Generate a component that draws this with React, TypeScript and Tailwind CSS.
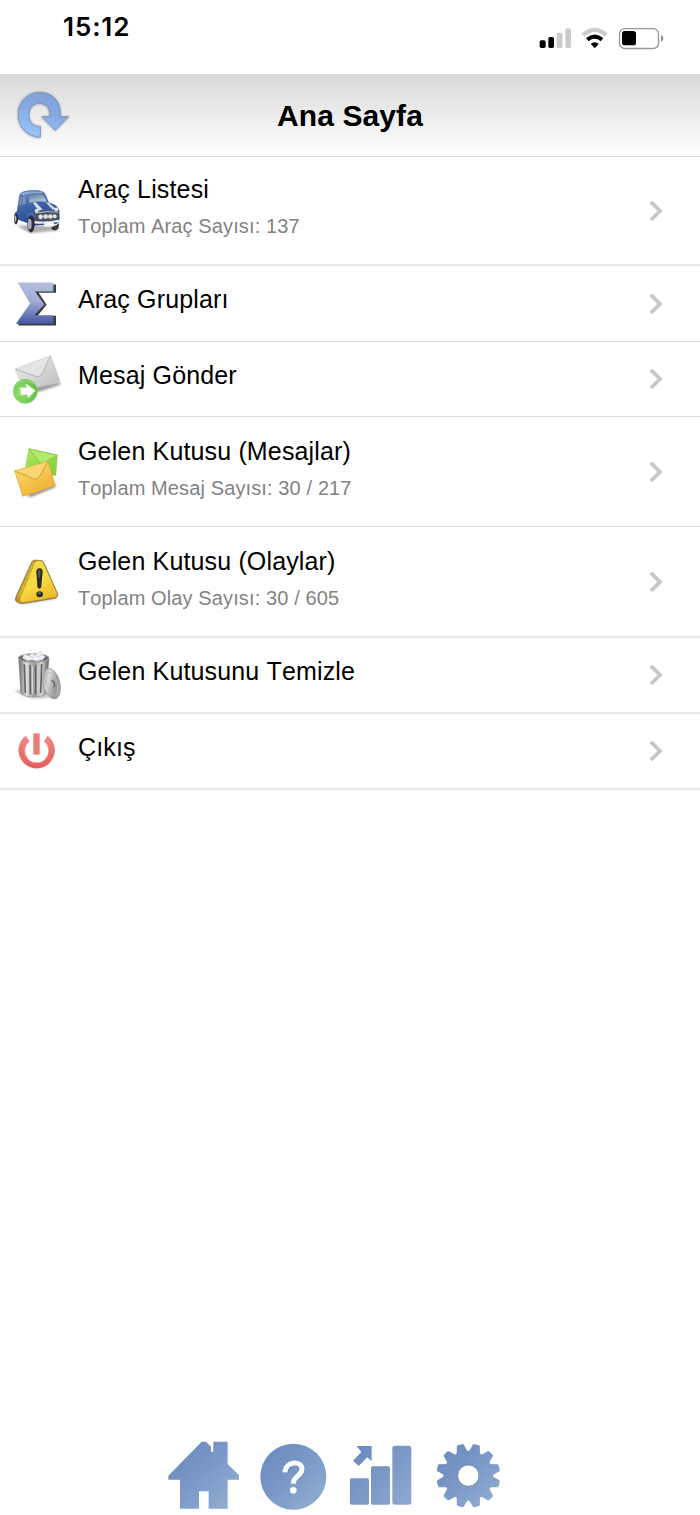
import type { ReactNode } from "react";

type MenuItem = {
  title: string;
  subtitle?: string;
  icon: ReactNode;
  rowClass: string;
  textClass: string;
};

const GEAR_TEETH = [15, 45, 75, 105, 135, 165, 195, 225, 255, 285, 315, 345];

function StatusIcons() {
  return (
    <svg width="125" height="23" viewBox="117 81 375 69">
      <rect x="119" y="121" width="18" height="23" rx="5" />
      <rect x="145" y="111" width="17" height="33" rx="5" />
      <rect x="170" y="98" width="17" height="46" rx="5" fill="#cbcbcb" />
      <rect x="196" y="85" width="17" height="59" rx="5" fill="#cbcbcb" />
      <path d="M249 105 Q284 74 319 105" fill="none" stroke="#cbcbcb" strokeWidth="12" />
      <path d="M262 119 Q284 101 306 119" fill="none" stroke="#000" strokeWidth="12" />
      <path d="M272 132 Q284 121 296 132 L284 145Z" />
      <rect x="358.500" y="86" width="117" height="59.500" rx="16" fill="#fff" stroke="#989898" strokeWidth="4" />
      <rect x="366" y="93" width="42" height="43" rx="8" />
      <path d="M483 104 Q490 109 490 115 T483 126Z" fill="#8c8c8c" />
    </svg>
  );
}

function RefreshIcon() {
  return (
    <svg width="60" height="54" viewBox="42 264 180 162">
      <defs>
        <linearGradient id="refresh" x1="0.700" y1="0" x2="0.350" y2="1">
          <stop offset="0" stopColor="#829fd4" />
          <stop offset="0.450" stopColor="#86a9e2" />
          <stop offset="1" stopColor="#96c5fc" />
        </linearGradient>
        <filter id="refreshShadow" x="-20%" y="-20%" width="140%" height="140%">
          <feDropShadow dx="-1" dy="1" stdDeviation="2.500" floodColor="#5f6a80" floodOpacity="0.600" />
        </filter>
      </defs>
      <path
        d="M121 412 C82 410 55 382 55 343 C55 304 83 277 120 277 C155 277 181 302 181 337 L181 350 L206 350 L166 391 L126 350 L150 350 C152 325 139 310 119 310 C99 310 87 324 87 344 C87 367 101 380 121 379Z"
        fill="url(#refresh)"
        stroke="#8196bd"
        strokeWidth="3"
        strokeLinejoin="round"
        filter="url(#refreshShadow)"
      />
    </svg>
  );
}

function CarIcon() {
  return (
    <svg width="54" height="54" viewBox="30 40.500 162 162">
      <defs>
        <linearGradient id="carBody" x1="0" y1="0" x2="0.300" y2="1">
          <stop offset="0" stopColor="#6d8dc2" />
          <stop offset="0.500" stopColor="#4165ab" />
          <stop offset="1" stopColor="#27468a" />
        </linearGradient>
        <linearGradient id="carGlass" x1="0" y1="0" x2="0.500" y2="1">
          <stop offset="0" stopColor="#58758f" />
          <stop offset="1" stopColor="#b9cddd" />
        </linearGradient>
        <filter id="soft">
          <feGaussianBlur stdDeviation="2.500" />
        </filter>
      </defs>
      <path d="M50 165 L90 188 L176 180 L172 164Z" fill="#777" opacity="0.600" filter="url(#soft)" />
      <path d="M42 137 Q43 127 51 121 L57 77 Q59 65 72 62 Q104 55 128 63 Q135 65 138 74 L147 97 Q172 102 178 119 L179 150 L170 160 L104 165 L84 158 L52 147 L42 151Z" fill="url(#carBody)" />
      <path d="M62 70 Q82 60 128 65 L125 68 Q91 65 69 74Z" fill="#94acd0" />
      <path d="M84 75 Q107 66 130 74 Q138 85 140 94 Q112 89 88 97Z" fill="url(#carGlass)" />
      <path d="M61 81 L76 77 L77 100 L57 105Z" fill="#7b96b6" />
      <path d="M67 80 L65 104" fill="none" stroke="#3b5b94" strokeWidth="2" />
      <path d="M98 97 L107 95 L128 117 L116 121Z" fill="#d5deeb" />
      <path d="M137 95 L146 97 L169 116 L158 118Z" fill="#d5deeb" />
      <path d="M103 126 Q139 118 177 123 L175 148 Q137 153 104 149Z" fill="#4e545f" />
      <path d="M105 128 Q140 120 175 125" fill="none" stroke="#b9bfc9" strokeWidth="3" />
      <g fill="#dfe2e6">
        <circle cx="110" cy="121" r="6" />
        <circle cx="169" cy="117" r="6" />
        <circle cx="122" cy="139" r="7" />
        <circle cx="137" cy="138" r="7" />
        <circle cx="151" cy="138" r="7" />
        <circle cx="164" cy="137" r="6" />
      </g>
      <path d="M98 151 Q138 156 180 147 L179 154 Q142 162 101 159Z" fill="#e6e8eb" />
      <path d="M132 155 L162 153 L161 168 L134 169Z" fill="#f7f7f8" stroke="#c8cbd0" strokeWidth="1.500" />
      <ellipse cx="93" cy="161" rx="11" ry="25" fill="#2a2d35" />
      <ellipse cx="89" cy="161" rx="6" ry="16" fill="#a8adb6" />
      <ellipse cx="48" cy="145" rx="6" ry="17" fill="#2d3038" />
      <ellipse cx="46" cy="144" rx="3" ry="10" fill="#b4b9c1" />
      <path d="M153 171 Q175 165 178 154 L175 174 L166 180 L157 178Z" fill="#33363c" />
      <path d="M80 139 Q95 119 105 140" fill="none" stroke="#6685bd" strokeWidth="3" />
    </svg>
  );
}

function SigmaIcon() {
  return (
    <svg width="54" height="54" viewBox="30 319.500 162 162">
      <defs>
        <linearGradient id="sigma" x1="0" y1="0" x2="0" y2="1">
          <stop offset="0" stopColor="#b3bddd" />
          <stop offset="0.450" stopColor="#a1add5" />
          <stop offset="1" stopColor="#4358a3" />
        </linearGradient>
      </defs>
      <path d="M100 342 L168 342 L168 367 L116 367 L140 403 L113 436 L168 436 L168 465 L55 465 L55 458 L98 402Z" fill="#3c3d43" />
      <path d="M53 336 L160 336 L160 363 L105 363 L133 402 L103 434 L160 434 L160 460 L48 460 L90 399Z" fill="url(#sigma)" />
    </svg>
  );
}

function SendIcon() {
  return (
    <svg width="54" height="54" viewBox="30 36 162 162">
      <defs>
        <linearGradient id="letter" x1="0" y1="0" x2="1" y2="1">
          <stop offset="0" stopColor="#f1f1f1" />
          <stop offset="1" stopColor="#bcbcbc" />
        </linearGradient>
        <radialGradient id="sendGreen" cx="0.300" cy="0.550" r="0.750">
          <stop offset="0" stopColor="#9ae071" />
          <stop offset="1" stopColor="#5dbd47" />
        </radialGradient>
      </defs>
      <path d="M71 148 L180 126 L181 134 L115 156Z" fill="#727272" opacity="0.700" filter="url(#soft)" />
      <path d="M46 87 L152 47 L180 124 L73 151Z" fill="url(#letter)" stroke="#c4c4c4" strokeWidth="2" strokeLinejoin="round" />
      <path d="M47 88 L110 110 Q122 113 128 98 L151 48Z" fill="#e4e4e4" />
      <path d="M47 88 L110 110 Q122 113 128 98 L151 48" fill="none" stroke="#b4b4b4" strokeWidth="3" />
      <circle cx="76" cy="154" r="36" fill="url(#sendGreen)" stroke="#7fcb69" strokeWidth="2" />
      <path d="M50 133 Q76 112 101 132" fill="none" stroke="#a2df86" strokeWidth="3" />
      <path d="M60 144 L80 144 L79 133 L105 152 L84 173 L83 162 L63 164 Q66 154 60 144Z" fill="#fff" stroke="#fff" strokeWidth="2" strokeLinejoin="round" />
    </svg>
  );
}

function InboxIcon() {
  return (
    <svg width="54" height="54" viewBox="30 313.500 162 162">
      <defs>
        <linearGradient id="greenMail" x1="0" y1="0" x2="1" y2="1">
          <stop offset="0" stopColor="#b1e863" />
          <stop offset="1" stopColor="#83cb33" />
        </linearGradient>
        <linearGradient id="yellowMail" x1="0" y1="0" x2="0.600" y2="1">
          <stop offset="0" stopColor="#ffe07a" />
          <stop offset="1" stopColor="#eeb031" />
        </linearGradient>
      </defs>
      <path d="M78 465 L167 433 L165 440 L93 469Z" fill="#5a4a20" opacity="0.700" filter="url(#soft)" />
      <path d="M87 325 L172 344 L167 405 L75 390Z" fill="url(#greenMail)" stroke="#8fc94c" strokeWidth="2" strokeLinejoin="round" />
      <path d="M87 325 L120 367 Q126 371 132 367 L172 344Z" fill="#b4e970" stroke="#86c544" strokeWidth="2.500" />
      <path d="M140 364 L167 403" stroke="#8ac746" strokeWidth="2" />
      <path d="M44 391 L144 363 L166 435 L68 467Z" fill="url(#yellowMail)" stroke="#d9a53a" strokeWidth="2" strokeLinejoin="round" />
      <path d="M45 392 L101 415 Q114 418 120 406 L144 364Z" fill="#fbd670" />
      <path d="M45 392 L101 415 Q114 418 120 406 L144 364" fill="none" stroke="#d49b34" strokeWidth="3" />
    </svg>
  );
}

function WarningIcon() {
  return (
    <svg width="54" height="54" viewBox="30 43.500 162 162">
      <defs>
        <linearGradient id="warn" x1="0" y1="0" x2="0.500" y2="1">
          <stop offset="0" stopColor="#ecd83e" />
          <stop offset="0.600" stopColor="#f8dc42" />
          <stop offset="1" stopColor="#eebc2c" />
        </linearGradient>
      </defs>
      <path d="M52 180 L160 170 L172 175 L70 192Z" fill="#777" opacity="0.500" filter="url(#soft)" />
      <path d="M96 63 Q99 59 106 59 L123 60 Q129 61 132 68 L172 158 Q176 170 165 173 L65 189 Q58 190 49 183 Q45 179 47 171Z" fill="#b8902b" stroke="#8a7136" strokeWidth="2.500" strokeLinejoin="round" />
      <path d="M105 66 Q109 60 119 61 Q127 62 130 69 L170 158 Q173 168 163 170 L69 185 Q59 185 61 174Z" fill="url(#warn)" />
      <path d="M97 66 L105 62 L62 170 L52 171Z" fill="#ceb136" />
      <path d="M109 93 Q110 83 119 83 Q128 83 128 93 L124 137 Q123 145 118 145 Q113 144 112 137Z" fill="#2b2b26" />
      <path d="M114 91 Q116 86 122 88 L120 111 L115 112Z" fill="#5a5a51" />
      <ellipse cx="119" cy="161" rx="10" ry="9" fill="#2b2b26" />
      <ellipse cx="118" cy="158" rx="5" ry="3" fill="#6c6c61" />
    </svg>
  );
}

function TrashIcon() {
  return (
    <svg width="54" height="54" viewBox="30 324 162 162">
      <defs>
        <linearGradient id="can" x1="0" y1="0" x2="1" y2="0">
          <stop offset="0" stopColor="#686868" />
          <stop offset="0.250" stopColor="#dedede" />
          <stop offset="0.500" stopColor="#9b9b9b" />
          <stop offset="0.750" stopColor="#d8d8d8" />
          <stop offset="1" stopColor="#5a5a5a" />
        </linearGradient>
        <linearGradient id="lid" x1="0" y1="0" x2="1" y2="1">
          <stop offset="0" stopColor="#888" />
          <stop offset="0.350" stopColor="#dadada" />
          <stop offset="0.650" stopColor="#979797" />
          <stop offset="1" stopColor="#bababa" />
        </linearGradient>
      </defs>
      <path d="M43 450 Q85 489 160 469 L145 452Z" fill="#888" opacity="0.500" filter="url(#soft)" />
      <path d="M56 352 L147 352 L139 459 Q129 471 98 471 Q72 471 62 458Z" fill="url(#can)" stroke="#808080" strokeWidth="1.500" />
      <path d="M73 375 L76 457 M90 377 L91 462 M107 377 L107 462 M125 374 L122 457" fill="none" stroke="#636363" strokeWidth="5" strokeLinecap="round" />
      <path d="M80 376 L82 458 M97 378 L98 463 M114 377 L114 461" fill="none" stroke="#dcdcdc" strokeWidth="3" />
      <ellipse cx="101" cy="354" rx="45" ry="12" fill="#5c5c5c" stroke="#9a9a9a" strokeWidth="4" />
      <path d="M67 354 L73 343 L87 347 L96 340 L107 345 L114 337 L125 334 L126 344 L136 350 L128 359 L111 363 L96 360 L82 362Z" fill="#eeeef4" stroke="#cdcdd8" strokeWidth="1.500" />
      <path d="M88 348 L97 353 L106 345 M112 351 L124 345" fill="none" stroke="#b9b9ce" strokeWidth="2" />
      <ellipse cx="155" cy="431" rx="25" ry="47" transform="rotate(-14 155 431)" fill="url(#lid)" stroke="#999" strokeWidth="2" />
      <ellipse cx="156" cy="431" rx="16" ry="35" transform="rotate(-14 156 431)" fill="none" stroke="#bcbcbc" strokeWidth="2" />
      <path d="M154 422 Q161 422 163 431 T160 441" fill="none" stroke="#5c5c5c" strokeWidth="3.500" />
    </svg>
  );
}

function PowerIcon() {
  return (
    <svg width="54" height="54" viewBox="30 552 162 162">
      <defs>
        <linearGradient id="power" x1="0" y1="0" x2="0" y2="1">
          <stop offset="0" stopColor="#ee8b86" />
          <stop offset="1" stopColor="#e55c5a" />
        </linearGradient>
      </defs>
      <path d="M77 588 L88 604 A36 36 0 1 0 132 604 L143 588 A54 54 0 1 1 77 588Z" fill="url(#power)" stroke="#e58280" strokeWidth="1.500" />
      <rect x="100" y="580" width="19" height="64" fill="#eb7c77" />
    </svg>
  );
}

function ChevronIcon() {
  return (
    <svg width="14" height="22" viewBox="0 0 14 22" className="mr-[37px] shrink-0">
      <path d="M1.900 1.800 L11 10.900 L1.900 20" fill="none" stroke="#c7c7c7" strokeWidth="3.800" />
    </svg>
  );
}

function HomeIcon() {
  return (
    <svg width="71" height="68" viewBox="24 33 213 204">
      <defs>
        <linearGradient id="navBlue" x1="0" y1="0" x2="1" y2="1">
          <stop offset="0" stopColor="#6786bc" />
          <stop offset="0.500" stopColor="#7b9ac8" />
          <stop offset="1" stopColor="#97b0d2" />
        </linearGradient>
      </defs>
      <path d="M25 137 L125 35 L138 35 L153 50 L153 65 L160 65 L160 35 L203 35 L203 102 L237 136 L237 149 L203 149 L203 236 L146 236 L146 184 L117 184 L117 236 L60 236 L60 149 L25 149Z" fill="url(#navBlue)" />
    </svg>
  );
}

function HelpIcon() {
  return (
    <svg width="67" height="67" viewBox="300 39 201 201" className="ml-[21px] mt-[2px]">
      <circle cx="400" cy="140" r="99" fill="url(#navBlue)" />
      <path d="M379 128 C379 97 428 93 427 120 C426 139 403 139 403 160" fill="none" stroke="#6380ae" strokeWidth="17" opacity="0.500" />
      <path d="M375 127 C377 91 427 91 426 118 C425 138 400 138 400 161" fill="none" stroke="#fafbfd" strokeWidth="15" />
      <circle cx="400" cy="181" r="10" fill="#fafbfd" />
    </svg>
  );
}

function ReportIcon() {
  return (
    <svg width="62" height="60" viewBox="45 45 186 180" className="ml-[23px] mt-1">
      <defs>
        <linearGradient id="bars" gradientUnits="userSpaceOnUse" x1="45" y1="45" x2="230" y2="225">
          <stop offset="0" stopColor="#6786bc" />
          <stop offset="0.550" stopColor="#7d9ac7" />
          <stop offset="1" stopColor="#8faad1" />
        </linearGradient>
      </defs>
      <g fill="url(#bars)">
        <path d="M65 48 L110 48 L110 94 L97 82 L71 108 L54 92 L79 66Z" />
        <rect x="45" y="145" width="57" height="79" rx="5" />
        <rect x="108" y="109" width="57" height="115" rx="5" />
        <rect x="172" y="47" width="57" height="177" rx="8" />
      </g>
    </svg>
  );
}

function SettingsIcon() {
  return (
    <svg width="65" height="65" viewBox="303 39 195 195" className="ml-6 mt-[2px]">
      <mask id="gear">
        <g fill="#fff" stroke="#fff" strokeWidth="8" strokeLinejoin="round">
          <circle cx="400" cy="137" r="71" />
          {GEAR_TEETH.map((angle) => (
            <path
              key={angle}
              d="M386 70 L393 45 L407 45 L414 70Z"
              transform={`rotate(${angle} 400 137)`}
            />
          ))}
        </g>
        <circle cx="400" cy="137" r="31" fill="#000" />
      </mask>
      <rect x="303" y="39" width="195" height="195" fill="url(#navBlue)" mask="url(#gear)" />
      <circle cx="400" cy="137" r="32" fill="none" stroke="#7c93b8" strokeWidth="2" />
    </svg>
  );
}

const menuItems: MenuItem[] = [
  {
    title: "Araç Listesi",
    subtitle: "Toplam Araç Sayısı: 137",
    icon: <CarIcon />,
    rowClass: "h-[109px] border-b-2 border-[#e9e9e9]",
    textClass: "pt-[17px]",
  },
  {
    title: "Araç Grupları",
    icon: <SigmaIcon />,
    rowClass: "h-[76px] border-b border-[#dedede]",
    textClass: "pt-[18px]",
  },
  {
    title: "Mesaj Gönder",
    icon: <SendIcon />,
    rowClass: "h-[75px] border-b border-[#dedede]",
    textClass: "pt-[18px]",
  },
  {
    title: "Gelen Kutusu (Mesajlar)",
    subtitle: "Toplam Mesaj Sayısı: 30 / 217",
    icon: <InboxIcon />,
    rowClass: "h-[110px] border-b border-[#dedede]",
    textClass: "pt-[19px]",
  },
  {
    title: "Gelen Kutusu (Olaylar)",
    subtitle: "Toplam Olay Sayısı: 30 / 605",
    icon: <WarningIcon />,
    rowClass: "h-[111px] border-b-2 border-[#e9e9e9]",
    textClass: "pt-[19px]",
  },
  {
    title: "Gelen Kutusunu Temizle",
    icon: <TrashIcon />,
    rowClass: "h-[76px] border-b-2 border-[#e9e9e9]",
    textClass: "pt-[18px]",
  },
  {
    title: "Çıkış",
    icon: <PowerIcon />,
    rowClass: "h-[76px] border-b-2 border-[#e9e9e9]",
    textClass: "pt-[18px]",
  },
];

function MenuRow({ item }: { item: MenuItem }) {
  return (
    <li className={`flex items-center ${item.rowClass}`}>
      <div className="ml-[10px] w-[54px] shrink-0">{item.icon}</div>
      <div className={`ml-[14px] flex-1 self-start [font-kerning:none] ${item.textClass}`}>
        <h2 className="text-[25px] leading-[30px] tracking-[0.15px] text-black">{item.title}</h2>
        {item.subtitle && (
          <p className="mt-[10px] text-[20px] leading-[25px] tracking-[0.12px] text-[#838383]">
            {item.subtitle}
          </p>
        )}
      </div>
      <ChevronIcon />
    </li>
  );
}

export default function App() {
  return (
    <div className="flex h-[1515px] w-[700px] flex-col overflow-hidden bg-white font-['Liberation_Sans',Arial,sans-serif]">
      <div className="flex h-[74px] shrink-0 items-start justify-between pl-[63px] pr-9">
        <span className="mt-[11px] font-[Inter,sans-serif] text-[26px] leading-8 font-semibold tracking-[0.9px] text-black">
          15:12
        </span>
        <div className="mt-[27px]">
          <StatusIcons />
        </div>
      </div>

      <header className="grid h-[83px] shrink-0 grid-cols-[100px_1fr_100px] items-center border-b border-[#dcdcdc] bg-linear-to-b from-[#d9d9d9] to-white">
        <button className="ml-[14px] w-fit" aria-label="Yenile">
          <RefreshIcon />
        </button>
        <h1 className="pt-[2px] text-center text-[30px] leading-9 font-bold tracking-[0.1px] text-black [font-kerning:none]">
          Ana Sayfa
        </h1>
      </header>

      <ul>
        {menuItems.map((item) => (
          <MenuRow key={item.title} item={item} />
        ))}
      </ul>

      <nav className="mt-auto flex h-[74px] shrink-0 items-start pl-[168px]">
        <HomeIcon />
        <HelpIcon />
        <ReportIcon />
        <SettingsIcon />
      </nav>
    </div>
  );
}
